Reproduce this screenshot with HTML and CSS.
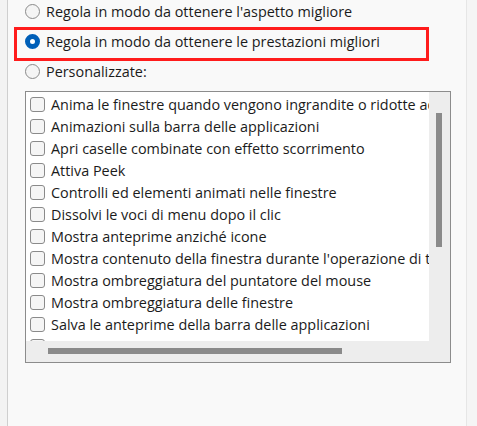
FILE: index.html
```html
<!DOCTYPE html>
<html lang="it">
<head>
<meta charset="utf-8">
<title>Opzioni prestazioni</title>
<link rel="stylesheet" href="styles.css">
</head>
<body>
<div class="window">
  <div class="edge-left"></div>
  <div class="pane">
    <div class="options">
      <label class="radio-row"><span class="radio"></span><span class="label">Regola in modo da ottenere l'aspetto migliore</span></label>
      <label class="radio-row"><span class="radio checked"></span><span class="label">Regola in modo da ottenere le prestazioni migliori</span></label>
      <label class="radio-row"><span class="radio"></span><span class="label">Personalizzate:</span></label>
      <div class="highlight"></div>
    </div>
    <div class="listbox">
      <div class="list">
        <div class="item"><span class="check"></span><span class="label">Anima le finestre quando vengono ingrandite o ridotte ad icona</span></div>
        <div class="item"><span class="check"></span><span class="label">Animazioni sulla barra delle applicazioni</span></div>
        <div class="item"><span class="check"></span><span class="label">Apri caselle combinate con effetto scorrimento</span></div>
        <div class="item"><span class="check"></span><span class="label">Attiva Peek</span></div>
        <div class="item"><span class="check"></span><span class="label">Controlli ed elementi animati nelle finestre</span></div>
        <div class="item"><span class="check"></span><span class="label">Dissolvi le voci di menu dopo il clic</span></div>
        <div class="item"><span class="check"></span><span class="label">Mostra anteprime anziché icone</span></div>
        <div class="item"><span class="check"></span><span class="label">Mostra contenuto della finestra durante l'operazione di trascinamento</span></div>
        <div class="item"><span class="check"></span><span class="label">Mostra ombreggiatura del puntatore del mouse</span></div>
        <div class="item"><span class="check"></span><span class="label">Mostra ombreggiatura delle finestre</span></div>
        <div class="item"><span class="check"></span><span class="label">Salva le anteprime della barra delle applicazioni</span></div>
        <div class="item"><span class="check"></span><span class="label">Scorrimento uniforme delle caselle di riepilogo</span></div>
      </div>
      <div class="vscroll"><div class="vthumb"></div></div>
      <div class="hscroll"><div class="hthumb"></div></div>
      <div class="corner"></div>
    </div>
  </div>
  <div class="edge-right"></div>
</div>
</body>
</html>
```

FILE: styles.css
```css
* { box-sizing: border-box; }

html, body {
  margin: 0;
  padding: 0;
  width: 477px;
  height: 426px;
  overflow: hidden;
  background: #f9f9f9;
}

body {
  font-family: "Open Sans", "Noto Sans", "Liberation Sans", sans-serif;
  font-size: 14.4px;
  color: #1b1b1b;
}

.window {
  display: flex;
  height: 426px;
}

.edge-left {
  width: 8px;
  flex: none;
  background: #f3f3f3;
  border-right: 1px solid #cfcfcf;
}

.pane {
  width: 459px;
  flex: none;
  background: #f9f9f9;
  border-right: 1px solid #e6e6e6;
  padding-left: 17px;
}

.edge-right {
  flex: 1;
  background: #f5f5f5;
}

.options {
  position: relative;
  margin-top: -4px;
}

.radio-row {
  display: flex;
  align-items: center;
  height: 30px;
  gap: 6px;
  white-space: nowrap;
}

.radio {
  width: 15px;
  height: 15px;
  flex: none;
  border-radius: 50%;
  border: 1px solid #8a8a8a;
  background: #f4f4f4;
}

.radio.checked {
  border: 5px solid #005fb8;
  background: #ffffff;
}

.highlight {
  position: absolute;
  left: -11px;
  top: 31px;
  width: 415px;
  height: 34px;
  border: 3px solid #ff1c1c;
  pointer-events: none;
}

.listbox {
  margin-top: 5px;
  width: 426px;
  height: 272px;
  border: 1px solid #8c8c8c;
  background: #ededed;
  display: grid;
  grid-template-columns: 403px 21px;
  grid-template-rows: 249px 21px;
}

.list {
  background: #ffffff;
  overflow: hidden;
  padding: 1px 0 0 4px;
}

.item {
  display: flex;
  align-items: center;
  height: 22px;
  gap: 6px;
  white-space: nowrap;
}

.check {
  width: 15px;
  height: 15px;
  flex: none;
  border: 1px solid #8a8a8a;
  border-radius: 3px;
  background: #f5f5f5;
}

.vscroll {
  padding: 21px 0 0 7px;
}

.vthumb {
  width: 6px;
  height: 134px;
  background: #8a8a8a;
}

.hscroll {
  padding: 7px 0 0 22px;
}

.hthumb {
  width: 294px;
  height: 6px;
  background: #8a8a8a;
}

.corner {
  background: #ededed;
}
```
